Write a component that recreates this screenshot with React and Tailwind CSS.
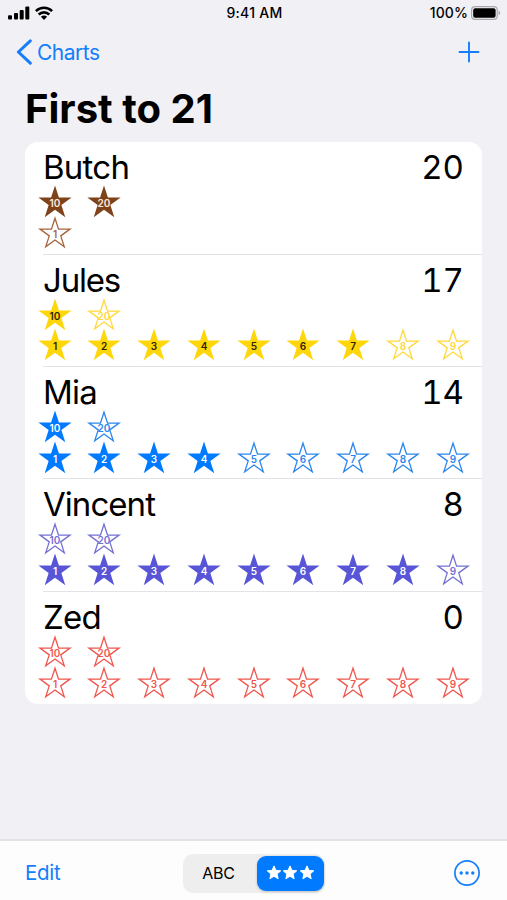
const PLAYERS = [
  { name: "Butch", score: 20, tens: 2, ones: 0, slots: 1, color: "#7f431b", line: "#a5643c", label: "#ffe9d9", nameClass: "tracking-[-0.75px]" },
  { name: "Jules", score: 17, tens: 1, ones: 7, slots: 9, color: "#ffd60a", line: "#ffd83a", label: "#2b2500", nameClass: "tracking-[-1.2px]" },
  { name: "Mia", score: 14, tens: 1, ones: 4, slots: 9, color: "#007aff", line: "#2a86ea", label: "#ffffff", nameClass: "tracking-[-0.8px]" },
  { name: "Vincent", score: 8, tens: 0, ones: 8, slots: 9, color: "#5856d6", line: "#7370d2", label: "#ffffff", nameClass: "tracking-[-0.95px]" },
  { name: "Zed", score: 0, tens: 0, ones: 0, slots: 9, color: "#ff3b30", line: "#f0564d", label: "#ffffff", nameClass: "tracking-[-0.7px]" },
];

// five-pointed star around (0, 0)
const starPoints = (r, ratio = 0.382) =>
  Array.from({ length: 10 }, (_, i) => {
    const radius = i % 2 ? r * ratio : r;
    const angle = (Math.PI / 5) * i - Math.PI / 2;
    return `${(radius * Math.cos(angle)).toFixed(2)},${(radius * Math.sin(angle)).toFixed(2)}`;
  }).join(" ");

const Star = ({ value, filled, player }) => (
  <svg viewBox="-17 -17 34 31" className="h-[31px] w-[34px] shrink-0 overflow-visible">
    {filled ? (
      <polygon points={starPoints(17.5)} fill={player.color} />
    ) : (
      <polygon points={starPoints(15.8)} fill="none" stroke={player.line} strokeWidth="1.3" />
    )}
    <text
      x="0"
      y="3.8"
      textAnchor="middle"
      className="font-['Inter'] text-[10px] font-semibold"
      fill={filled ? player.label : player.line}
    >
      {value}
    </text>
  </svg>
);

const PlayerRow = ({ player, last }) => (
  <li className="flex h-[112.4px] flex-col pl-[18px]">
    <div className="flex h-11 shrink-0 items-end justify-between pr-[18px] text-[33px] leading-[38px]">
      <span className={player.nameClass}>{player.name}</span>
      <span className="tabular-nums">{player.score}</span>
    </div>
    <div className="-ml-[5.5px] grid auto-rows-[30.7px] grid-cols-[repeat(9,49.8px)]">
      {[10, 20].map((n, i) => (
        <Star key={n} value={n} filled={i < player.tens} player={player} />
      ))}
    </div>
    <div className="-ml-[5.5px] grid auto-rows-[30.7px] grid-cols-[repeat(9,49.8px)]">
      {Array.from({ length: player.slots }, (_, i) => (
        <Star key={i} value={i + 1} filled={i < player.ones} player={player} />
      ))}
    </div>
    {!last && <div className="mt-auto h-px shrink-0 bg-[#e3e3e6]" />}
  </li>
);

const StatusBar = () => (
  <div className="grid h-[26px] grid-cols-3 items-center pr-1.5 pl-2 text-[14px] font-medium">
    <div className="flex items-center gap-[5px]">
      <svg viewBox="0 0 22 14" className="h-[14px] w-[22px]">
        <rect x="0" y="9.2" width="4" height="4.3" rx="1" />
        <rect x="6" y="7" width="4" height="6.5" rx="1" />
        <rect x="11.7" y="4" width="4" height="9.5" rx="1" />
        <rect x="17.3" y="0.5" width="4" height="13" rx="1" />
      </svg>
      <svg viewBox="0 0 18 14" className="h-[14px] w-[18px]" fill="none" stroke="#000" strokeWidth="2.6">
        <path d="M0.9 5.1a11.6 11.6 0 0 1 16.2 0" />
        <path d="M3.7 8.5a7.6 7.6 0 0 1 10.6 0" />
        <path d="M5.9 10.8a4.2 4.2 0 0 1 6.2 0L9 13.9z" fill="#000" stroke="none" />
      </svg>
    </div>
    <span className="-mt-px text-center tracking-[0.25px]">9:41 AM</span>
    <div className="flex items-center justify-end gap-[3px]">
      <span className="-mt-px tracking-[0.1px]">100%</span>
      <svg viewBox="0 0 30 14" className="h-[14px] w-[30px]">
        <rect x="0.6" y="0.6" width="25.6" height="12.8" rx="3.4" fill="none" stroke="#a9a9ad" strokeWidth="1.2" />
        <rect x="2.2" y="2.2" width="22.4" height="9.6" rx="2" />
        <path d="M27.6 4.8c2 .6 2 3.8 0 4.4z" fill="#a9a9ad" />
      </svg>
    </div>
  </div>
);

const App = () => (
  <div className="flex h-[900px] w-[507px] flex-col overflow-hidden bg-[#f1f0f5] font-['Inter',sans-serif] text-black">
    <StatusBar />

    <nav className="flex h-[53px] shrink-0 items-center justify-between pr-[27px] pb-px pl-4 text-[#147efb]">
      <button className="flex items-center gap-[5px] text-[21px] tracking-[-0.5px]">
        <svg viewBox="0 0 16 26" className="h-[26px] w-4" fill="none" stroke="currentColor" strokeWidth="3" strokeLinecap="round" strokeLinejoin="round">
          <path d="M14.3 1.8L2.4 13l11.9 11.2" />
        </svg>
        <span className="pt-px">Charts</span>
      </button>
      <svg viewBox="0 0 22 22" className="h-[22px] w-[22px]" stroke="currentColor" strokeWidth="1.9" strokeLinecap="round">
        <path d="M11 1.5v19M1.5 11h19" />
      </svg>
    </nav>

    <h1 className="flex h-[63px] shrink-0 items-center pb-1 pl-[25px] text-[40px] font-bold tracking-[0.02px]">First to 21</h1>

    <ul className="mx-[25px] mt-[0.3px] h-[562px] shrink-0 overflow-hidden rounded-[13px] bg-white">
      {PLAYERS.map((player, i) => (
        <PlayerRow key={player.name} player={player} last={i === PLAYERS.length - 1} />
      ))}
    </ul>

    <footer className="mt-auto grid h-[61px] grid-cols-[1fr_auto_1fr] items-center border-t-2 border-[#e2e1e6] bg-[#fdfdfe] pt-[5px] pr-[27px] pl-[25px] text-[#147efb]">
      <button className="justify-self-start pt-px text-[20.5px] tracking-[-0.3px]">Edit</button>
      <div className="ml-0.5 flex h-[39px] w-[142px] items-center rounded-[10px] bg-[#eeeeef] py-0.5 pr-px pl-0.5">
        <span className="flex-1 pr-1 text-center text-[16px] tracking-[-0.3px] text-black">ABC</span>
        <span className="flex h-[35px] w-[67px] items-center justify-center gap-[0.5px] rounded-[9px] bg-[#007aff] shadow-[0_1px_3px_rgba(0,0,0,0.2)]">
          {[0, 1, 2].map((i) => (
            <svg key={i} viewBox="-8 -8 16 16" className="h-4 w-4" fill="#fff" stroke="#fff" strokeWidth="1" strokeLinejoin="round">
              <polygon points={starPoints(7.1, 0.46)} />
            </svg>
          ))}
        </span>
      </div>
      <svg viewBox="0 0 26 26" className="h-[26px] w-[26px] justify-self-end" fill="currentColor">
        <circle cx="13" cy="13" r="12.1" fill="none" stroke="currentColor" strokeWidth="1.7" />
        <circle cx="7.2" cy="13" r="1.7" />
        <circle cx="13" cy="13" r="1.7" />
        <circle cx="18.8" cy="13" r="1.7" />
      </svg>
    </footer>
  </div>
);

export default App;
